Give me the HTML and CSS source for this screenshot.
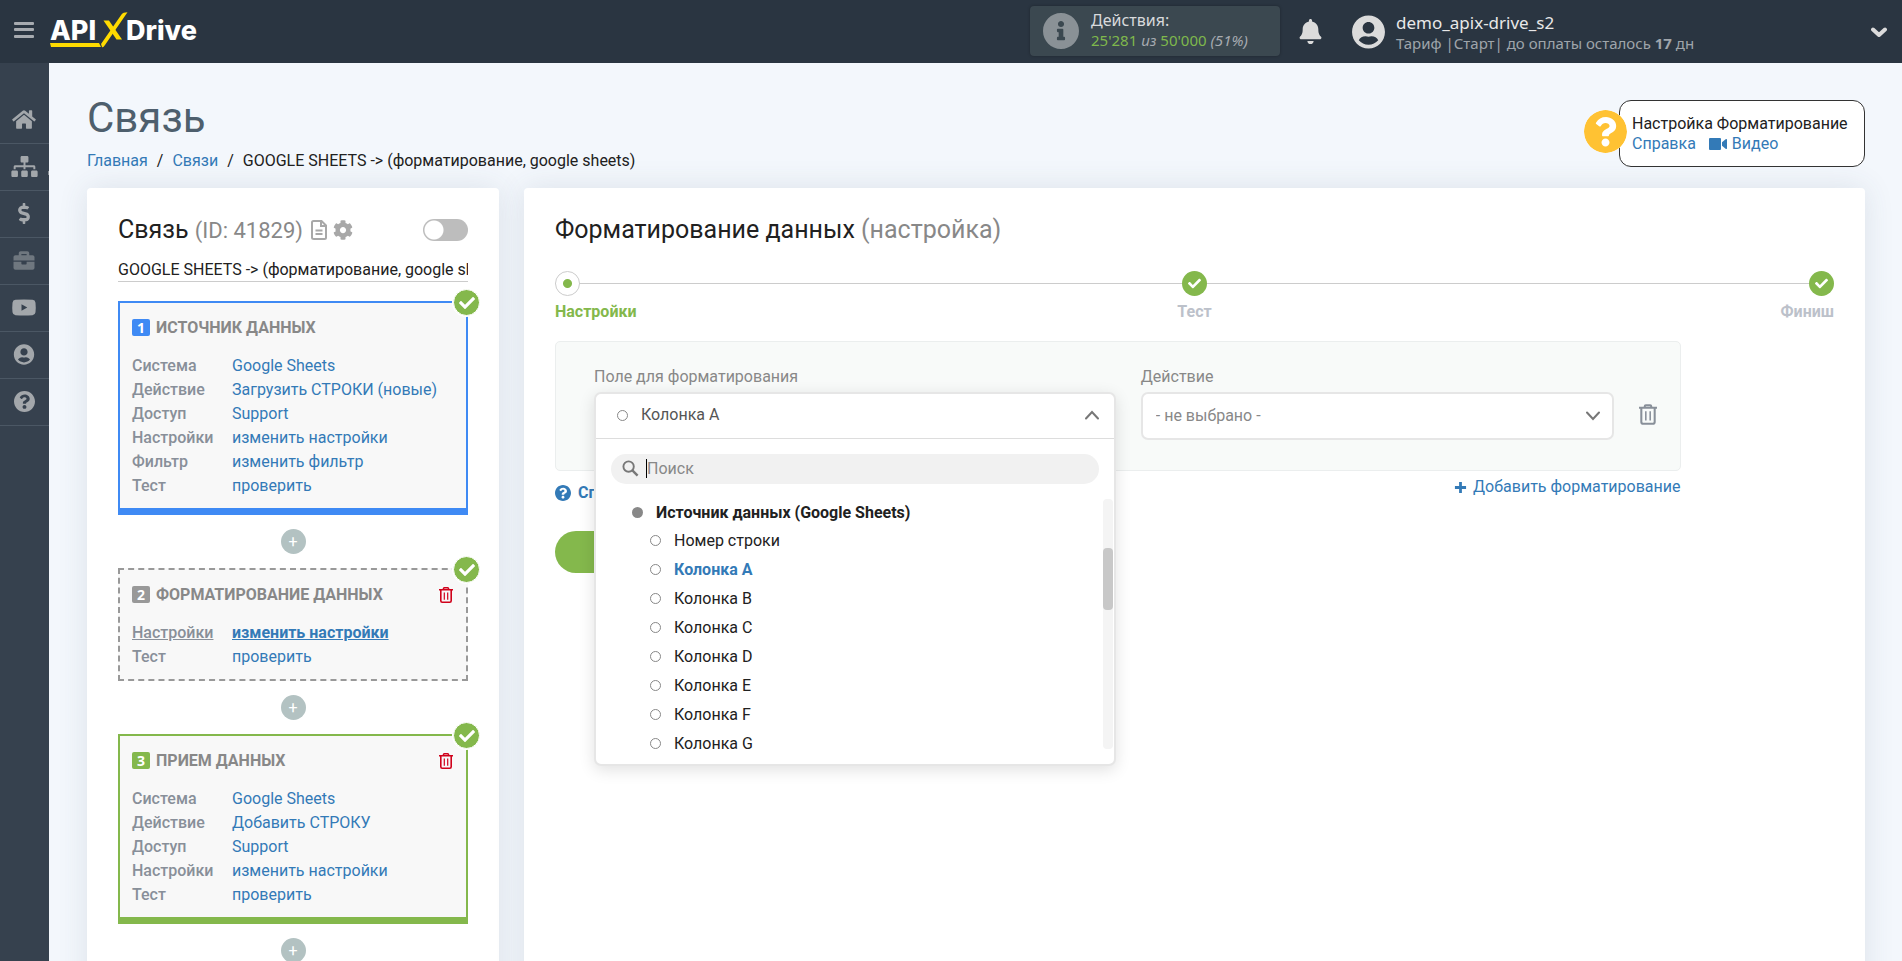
FILE: index.html
```html
<!DOCTYPE html>
<html lang="ru">
<head>
<meta charset="utf-8">
<title>Связь</title>
<link rel="stylesheet" href="styles.css">
</head>
<body>
<svg class="sprite" aria-hidden="true">
  <symbol id="i-bars" viewBox="0 0 20 18"><rect x="0" y="1" width="20" height="3" rx="1"/><rect x="0" y="7" width="20" height="3" rx="1"/><rect x="0" y="14" width="20" height="3" rx="1"/></symbol>
  <symbol id="i-home" viewBox="0 0 576 512"><path d="M280.37 148.26L96 300.11V464a16 16 0 0 0 16 16l112.06-.29a16 16 0 0 0 15.92-16V368a16 16 0 0 1 16-16h64a16 16 0 0 1 16 16v95.64a16 16 0 0 0 16 16.05L464 480a16 16 0 0 0 16-16V300L295.67 148.26a12.19 12.19 0 0 0-15.3 0zM571.6 251.47L488 182.56V44.05a12 12 0 0 0-12-12h-56a12 12 0 0 0-12 12v72.61L318.47 43a48 48 0 0 0-61 0L4.34 251.47a12 12 0 0 0-1.6 16.9l25.5 31A12 12 0 0 0 45.15 301l235.22-193.74a12.19 12.19 0 0 1 15.3 0L530.9 301a12 12 0 0 0 16.9-1.6l25.5-31a12 12 0 0 0-1.7-16.93z"/></symbol>
  <symbol id="i-sitemap" viewBox="0 0 640 512"><path d="M128 352H32c-17.67 0-32 14.33-32 32v96c0 17.67 14.33 32 32 32h96c17.67 0 32-14.33 32-32v-96c0-17.67-14.33-32-32-32zm-24-80h192v48h48v-48h192v48h48v-57.59c0-21.17-17.23-38.41-38.41-38.41H344v-64h40c17.67 0 32-14.33 32-32V32c0-17.67-14.33-32-32-32H256c-17.67 0-32 14.33-32 32v96c0 17.67 14.33 32 32 32h40v64H94.41C73.23 224 56 241.23 56 262.41V320h48v-48zm264 80h-96c-17.67 0-32 14.33-32 32v96c0 17.67 14.33 32 32 32h96c17.67 0 32-14.33 32-32v-96c0-17.67-14.33-32-32-32zm240 0h-96c-17.67 0-32 14.33-32 32v96c0 17.67 14.33 32 32 32h96c17.67 0 32-14.33 32-32v-96c0-17.67-14.33-32-32-32z"/></symbol>
  <symbol id="i-dollar" viewBox="0 0 288 512"><path d="M209.2 233.4l-108-31.6C88.7 198.2 80 186.5 80 173.5c0-16.3 13.2-29.5 29.5-29.5h66.3c12.2 0 24.2 3.7 34.2 10.5 6.1 4.1 14.3 3.1 19.5-2l34.8-34c7.1-6.9 6.1-18.4-1.8-24.5C238 74.8 207.4 64.1 176 64V16c0-8.8-7.2-16-16-16h-32c-8.8 0-16 7.2-16 16v48h-2.5C45.8 64-5.4 118.7.5 183.6c4.2 46.1 39.4 83.6 83.8 96.6l102.5 30c12.5 3.7 21.2 15.3 21.2 28.3 0 16.3-13.2 29.5-29.5 29.5h-66.3C100 368 88 364.3 78 357.5c-6.1-4.1-14.3-3.1-19.5 2l-34.8 34c-7.1 6.9-6.1 18.4 1.8 24.5 24.5 19.2 55.1 29.9 86.5 30v48c0 8.8 7.2 16 16 16h32c8.8 0 16-7.2 16-16v-48.2c46.6-.9 90.3-28.6 105.7-72.7 21.5-61.6-14.6-124.8-72.5-141.7z"/></symbol>
  <symbol id="i-briefcase" viewBox="0 0 512 512"><path d="M320 336c0 8.84-7.16 16-16 16h-96c-8.84 0-16-7.16-16-16v-48H0v144c0 25.6 22.4 48 48 48h416c25.6 0 48-22.4 48-48V288H320v48zm144-208h-80V80c0-25.6-22.4-48-48-48H176c-25.6 0-48 22.4-48 48v48H48c-25.6 0-48 22.4-48 48v80h512v-80c0-25.6-22.4-48-48-48zm-144 0H192V96h128v32z"/></symbol>
  <symbol id="i-youtube" viewBox="0 0 24 16"><path fill-rule="evenodd" d="M3.500.3Q12-.3 20.500.3Q23.200.5 23.500 3.200Q24 8 23.500 12.800Q23.200 15.500 20.500 15.700Q12 16.300 3.500 15.700Q.8 15.500.500 12.800Q0 8 .500 3.200Q.8.5 3.500.3zM9.500 4.700v6.600L15.300 8z"/></symbol>
  <symbol id="i-user" viewBox="0 0 496 512"><path d="M248 8C111 8 0 119 0 256s111 248 248 248 248-111 248-248S385 8 248 8zm0 96c48.600 0 88 39.400 88 88s-39.400 88-88 88-88-39.400-88-88 39.400-88 88-88zm0 344c-58.700 0-111.300-26.600-146.500-68.200 18.800-35.400 55.600-59.800 98.500-59.800 2.400 0 4.800.4 7.100 1.100 13 4.200 26.600 6.900 40.900 6.900 14.300 0 28-2.700 40.900-6.900 2.300-.7 4.700-1.100 7.100-1.100 42.900 0 79.700 24.400 98.500 59.800C359.300 421.400 306.700 448 248 448z"/></symbol>
  <symbol id="i-question" viewBox="8 8 496 496"><path d="M504 256c0 136.997-111.043 248-248 248S8 392.997 8 256C8 119.083 119.043 8 256 8s248 111.083 248 248zM262.655 90c-54.497 0-89.255 22.957-116.549 63.758-3.536 5.286-2.353 12.415 2.715 16.258l34.699 26.310c5.205 3.947 12.621 3.008 16.665-2.122 17.864-22.658 30.113-35.797 57.303-35.797 20.429 0 45.698 13.148 45.698 32.958 0 14.976-12.363 22.667-32.534 33.976C247.128 238.528 216 254.941 216 296v4c0 6.627 5.373 12 12 12h56c6.627 0 12-5.373 12-12v-1.333c0-28.462 83.186-29.647 83.186-106.667 0-58.002-60.165-102-116.531-102zM256 338c-25.365 0-46 20.635-46 46 0 25.364 20.635 46 46 46s46-20.636 46-46c0-25.365-20.635-46-46-46z"/></symbol>
  <symbol id="i-info" viewBox="8 8 496 496"><path d="M256 8C119.043 8 8 119.083 8 256c0 136.997 111.043 248 248 248s248-111.003 248-248C504 119.083 392.957 8 256 8zm0 110c23.196 0 42 18.804 42 42s-18.804 42-42 42-42-18.804-42-42 18.804-42 42-42zm56 254c0 6.627-5.373 12-12 12h-88c-6.627 0-12-5.373-12-12v-24c0-6.627 5.373-12 12-12h12v-64h-12c-6.627 0-12-5.373-12-12v-24c0-6.627 5.373-12 12-12h64c6.627 0 12 5.373 12 12v100h12c6.627 0 12 5.373 12 12v24z"/></symbol>
  <symbol id="i-bell" viewBox="0 0 448 512"><path d="M224 512c35.320 0 63.970-28.650 63.970-64H160.030c0 35.350 28.650 64 63.970 64zm215.390-149.710c-19.320-20.760-55.470-51.990-55.470-154.290 0-77.700-54.480-139.900-127.940-155.160V32c0-17.670-14.320-32-31.980-32s-31.980 14.330-31.980 32v20.840C118.560 68.100 64.080 130.300 64.080 208c0 102.300-36.150 133.530-55.470 154.290-6 6.450-8.660 14.160-8.610 21.710.11 16.400 12.980 32 32.100 32h383.800c19.120 0 32-15.600 32.100-32 .05-7.550-2.610-15.270-8.610-21.710z"/></symbol>
  <symbol id="i-check" viewBox="0 0 512 512"><path d="M173.898 439.404l-166.400-166.400c-9.997-9.997-9.997-26.206 0-36.204l36.203-36.204c9.997-9.998 26.207-9.998 36.204 0L192 312.690 432.095 72.596c9.997-9.997 26.207-9.997 36.204 0l36.203 36.204c9.997 9.997 9.997 26.206 0 36.204l-294.400 294.401c-9.998 9.997-26.207 9.997-36.204-.001z"/></symbol>
  <symbol id="i-cog" viewBox="0 0 512 512"><path d="M487.400 315.700l-42.600-24.600c4.300-23.200 4.300-47 0-70.200l42.600-24.600c4.900-2.800 7.100-8.600 5.500-14-11.100-35.600-30-67.800-54.700-94.600-3.800-4.100-10-5.100-14.800-2.300L380.800 110c-17.900-15.400-38.500-27.300-60.800-35.100V25.800c0-5.600-3.900-10.500-9.400-11.700-36.700-8.200-74.300-7.800-109.200 0-5.500 1.200-9.400 6.100-9.400 11.700V75c-22.200 7.900-42.800 19.800-60.800 35.100L88.700 85.500c-4.900-2.800-11-1.900-14.800 2.300-24.700 26.700-43.600 58.900-54.700 94.600-1.700 5.400.6 11.200 5.500 14L67.300 221c-4.300 23.200-4.300 47 0 70.200l-42.600 24.600c-4.900 2.800-7.100 8.600-5.500 14 11.100 35.600 30 67.800 54.700 94.600 3.800 4.100 10 5.100 14.800 2.300l42.600-24.600c17.900 15.400 38.500 27.300 60.800 35.100v49.200c0 5.600 3.900 10.500 9.400 11.700 36.700 8.200 74.300 7.800 109.200 0 5.500-1.200 9.400-6.100 9.400-11.700v-49.200c22.200-7.900 42.800-19.800 60.800-35.100l42.600 24.600c4.900 2.800 11 1.900 14.800-2.300 24.700-26.700 43.600-58.900 54.700-94.600 1.500-5.500-.7-11.300-5.600-14.100zM256 336c-44.100 0-80-35.900-80-80s35.900-80 80-80 80 35.900 80 80-35.900 80-80 80z"/></symbol>
  <symbol id="i-file" viewBox="0 0 16 20"><path d="M3 1h7.500L15 5.500V17.500q0 1.500-1.500 1.500H3q-2 0-2-1.500V2.500Q1 1 2.500 1zM10 1v5h5M4.500 10.500h7M4.500 14h7" fill="none" stroke="currentColor" stroke-width="2"/></symbol>
  <symbol id="i-trash" viewBox="0 0 14 16"><path d="M0 2.800h14M4.500 2.500V1.600Q4.500.8 5.300.8h3.400q.8 0 .8.800v.9M1.800 3v10.800q0 1.400 1.400 1.400h7.600q1.400 0 1.400-1.400V3" fill="none" stroke="currentColor" stroke-width="1.600"/><path d="M5.300 5.500v7.200M8.700 5.500v7.200" fill="none" stroke="currentColor" stroke-width="1.200"/></symbol>
  <symbol id="i-video" viewBox="0 0 18 12"><rect x="0" y="0" width="12" height="12" rx="1"/><path d="M13 4.300L16.600 1.200Q18 .6 18 1.800v8.400q0 1.200-1.400.6L13 7.700z"/></symbol>
  <symbol id="i-angle" viewBox="0 0 16 10"><path d="M2 2.500l6 5.500 6-5.500" fill="none" stroke="currentColor" stroke-width="4" stroke-linecap="round" stroke-linejoin="round"/></symbol>
  <symbol id="i-chev" viewBox="0 0 14 10"><path d="M1 1.500l6 6.500 6-6.500" fill="none" stroke="currentColor" stroke-width="2" stroke-linecap="round"/></symbol>
  <symbol id="i-plus" viewBox="0 0 14 14"><path d="M7 1v12M1 7h12" fill="none" stroke="currentColor" stroke-width="3"/></symbol>
  <symbol id="i-search" viewBox="0 0 18 18"><circle cx="7" cy="7" r="5.500" fill="none" stroke="currentColor" stroke-width="2"/><path d="M11 11l5.500 5.500" fill="none" stroke="currentColor" stroke-width="2.500"/></symbol>
</svg>

<header class="topbar">
  <button class="menu-btn" type="button" aria-label="Меню"><svg class="ic-bars"><use href="#i-bars"/></svg></button>
  <a class="logo" href="#" aria-label="ApiXDrive">
    <svg class="logo-art" viewBox="0 0 154 38">
      <path d="M0 32h49l2 4H1z" fill="#ffdb00"/>
      <path d="M51 33L71.500 3.500Q73 1.300 77.500 1.300L55 34Q53 37 52 36z" fill="#ffdb00"/>
      <path d="M53.500 9.500h5.500L72 28.500h-5.500z" fill="#ffdb00"/>
      <text class="logo-text" x="0" y="29">API</text>
      <text class="logo-text" x="76" y="29">Drive</text>
    </svg>
  </a>
  <div class="usage">
    <svg class="ic-info"><use href="#i-info"/></svg>
    <div class="usage-text">
      <div class="usage-title">Действия:</div>
      <div class="usage-num"><span class="green">25'281</span> <i>из</i> <span class="green">50'000</span> <i>(51%)</i></div>
    </div>
  </div>
  <button class="bell" type="button" aria-label="Уведомления"><svg class="ic-bell"><use href="#i-bell"/></svg></button>
  <button class="account" type="button">
    <svg class="ic-account"><use href="#i-user"/></svg>
    <span class="account-text"><span class="account-name">demo_apix-drive_s2</span><span class="account-plan">Тариф |Старт| до оплаты осталось <b>17</b> дн</span></span>
    <svg class="ic-angle"><use href="#i-angle"/></svg>
  </button>
</header>

<div class="shell">
  <nav class="side">
    <a href="#" aria-label="Главная"><svg class="s24"><use href="#i-home"/></svg></a>
    <a href="#" class="has-sub" aria-label="Связи"><svg class="s27"><use href="#i-sitemap"/></svg></a>
    <a href="#" aria-label="Оплата"><svg class="s22"><use href="#i-dollar"/></svg></a>
    <a href="#" class="dim" aria-label="Проекты"><svg class="s22"><use href="#i-briefcase"/></svg></a>
    <a href="#" aria-label="Видео"><svg class="s24"><use href="#i-youtube"/></svg></a>
    <a href="#" aria-label="Профиль"><svg class="s22"><use href="#i-user"/></svg></a>
    <a href="#" aria-label="Помощь"><svg class="s21"><use href="#i-question"/></svg></a>
  </nav>

  <main class="content">
    <div class="page-head">
      <div>
        <h1>Связь</h1>
        <nav class="crumbs"><a href="#">Главная</a><span>/</span><a href="#">Связи</a><span>/</span>GOOGLE SHEETS -&gt; (форматирование, google sheets)</nav>
      </div>
      <aside class="help">
        <svg class="ic-help"><use href="#i-question"/></svg>
        <div>Настройка Форматирование</div>
        <div class="help-links"><a href="#">Справка</a><a href="#"><svg class="ic-video"><use href="#i-video"/></svg>Видео</a></div>
      </aside>
    </div>

    <div class="columns">
      <section class="panel flow">
        <div class="flow-head">
          <h2>Связь <span class="muted">(ID: 41829)</span></h2>
          <svg class="ic-file"><use href="#i-file"/></svg>
          <svg class="ic-cog"><use href="#i-cog"/></svg>
          <input class="toggle" type="checkbox" aria-label="Включить связь">
        </div>
        <input class="name" type="text" aria-label="Название" value="GOOGLE SHEETS -> (форматирование, google sheets)">

        <article class="block blue">
          <span class="done"><svg><use href="#i-check"/></svg></span>
          <h3><span class="num">1</span>ИСТОЧНИК ДАННЫХ</h3>
          <dl>
            <dt>Система</dt><dd><a href="#">Google Sheets</a></dd>
            <dt>Действие</dt><dd><a href="#">Загрузить СТРОКИ (новые)</a></dd>
            <dt>Доступ</dt><dd><a href="#">Support</a></dd>
            <dt>Настройки</dt><dd><a href="#">изменить настройки</a></dd>
            <dt>Фильтр</dt><dd><a href="#">изменить фильтр</a></dd>
            <dt>Тест</dt><dd><a href="#">проверить</a></dd>
          </dl>
        </article>
        <button class="add" type="button">+</button>
        <article class="block gray">
          <span class="done"><svg><use href="#i-check"/></svg></span>
          <h3><span class="num">2</span>ФОРМАТИРОВАНИЕ ДАННЫХ<button class="del" type="button" aria-label="Удалить"><svg><use href="#i-trash"/></svg></button></h3>
          <dl>
            <dt class="current">Настройки</dt><dd class="current"><a href="#">изменить настройки</a></dd>
            <dt>Тест</dt><dd><a href="#">проверить</a></dd>
          </dl>
        </article>
        <button class="add" type="button">+</button>
        <article class="block lime">
          <span class="done"><svg><use href="#i-check"/></svg></span>
          <h3><span class="num">3</span>ПРИЕМ ДАННЫХ<button class="del" type="button" aria-label="Удалить"><svg><use href="#i-trash"/></svg></button></h3>
          <dl>
            <dt>Система</dt><dd><a href="#">Google Sheets</a></dd>
            <dt>Действие</dt><dd><a href="#">Добавить СТРОКУ</a></dd>
            <dt>Доступ</dt><dd><a href="#">Support</a></dd>
            <dt>Настройки</dt><dd><a href="#">изменить настройки</a></dd>
            <dt>Тест</dt><dd><a href="#">проверить</a></dd>
          </dl>
        </article>
        <button class="add" type="button">+</button>
      </section>

      <section class="panel setup">
        <h2>Форматирование данных <span class="muted">(настройка)</span></h2>
        <ol class="steps">
          <li class="active"><span class="dot"></span>Настройки</li>
          <li><span class="dot"><svg><use href="#i-check"/></svg></span>Тест</li>
          <li><span class="dot"><svg><use href="#i-check"/></svg></span>Финиш</li>
        </ol>

        <form class="form">
          <div class="rule">
            <div class="field source">
              <label for="src">Поле для форматирования</label>
              <div class="dropdown">
                <button id="src" class="dd-head" type="button" aria-expanded="true"><span class="ring"></span>Колонка A<svg class="ic-chev up"><use href="#i-chev"/></svg></button>
                <div class="search">
                  <svg class="ic-search"><use href="#i-search"/></svg><span class="caret"></span>
                  <input type="text" placeholder="Поиск" aria-label="Поиск">
                </div>
                <div class="dd-body">
                  <ul class="options">
                    <li class="group"><span class="bullet"></span>Источник данных (Google Sheets)</li>
                    <li><span class="ring"></span>Номер строки</li>
                    <li class="picked"><span class="ring"></span>Колонка A</li>
                    <li><span class="ring"></span>Колонка B</li>
                    <li><span class="ring"></span>Колонка C</li>
                    <li><span class="ring"></span>Колонка D</li>
                    <li><span class="ring"></span>Колонка E</li>
                    <li><span class="ring"></span>Колонка F</li>
                    <li><span class="ring"></span>Колонка G</li>
                  </ul>
                  <div class="track"><div class="thumb"></div></div>
                </div>
              </div>
            </div>
            <div class="field action">
              <label for="act">Действие</label>
              <div class="select"><select id="act"><option>- не выбрано -</option></select><svg class="ic-chev"><use href="#i-chev"/></svg></div>
            </div>
            <button class="rule-del" type="button" aria-label="Удалить"><svg><use href="#i-trash"/></svg></button>
          </div>
          <div class="under">
            <a class="hint" href="#"><svg><use href="#i-question"/></svg>Справка</a>
            <a class="more" href="#"><svg><use href="#i-plus"/></svg>Добавить форматирование</a>
          </div>
          <button class="next" type="button">Далее</button>
        </form>
      </section>
    </div>
  </main>
</div>
</body>
</html>
```
FILE: styles.css
```css
* { box-sizing: border-box; }
body {
  margin: 0;
  height: 100vh;
  overflow: hidden;
  display: flex;
  flex-direction: column;
  background: #f3f7fc;
  color: #212121;
  font: 16px/24px Roboto, "Noto Sans", sans-serif;
}
.sprite { position: absolute; width: 0; height: 0; }
svg { fill: currentColor; display: block; flex: none; }
button { font: inherit; color: inherit; border: 0; padding: 0; background: none; cursor: pointer; text-align: left; }
input, select { font: inherit; color: inherit; }
a { color: #337ab7; text-decoration: none; }
h1, h2, h3, dl, dd, ol, ul { margin: 0; padding: 0; }
ol, ul { list-style: none; }
.muted { color: #888; }

/* Top bar */
.topbar {
  flex: none;
  display: flex;
  align-items: center;
  height: 63px;
  background: #2a3541;
  font-family: "Noto Sans", sans-serif;
}
.menu-btn { padding: 0 14px; color: #a7abb0; }
.ic-bars { width: 20px; height: 18px; }
.topbar .menu-btn, .logo { margin-bottom: 3px; }
.logo { margin-left: 2px; }
.logo-art { width: 154px; height: 38px; }
.logo-text { font: 800 27px Inter, sans-serif; fill: #fff; }
.usage {
  display: flex;
  align-items: center;
  gap: 12px;
  width: 250px;
  height: 50px;
  margin: 0 0 1px auto;
  padding: 0 13px;
  border-radius: 4px;
  background: #3b4850;
  box-shadow: 0 0 3px rgba(0, 0, 0, .3);
}
.ic-info { width: 36px; height: 36px; color: #8a9196; }
.usage-text { padding-bottom: 3px; }
.usage-title { color: #d8dadc; font-size: 16px; line-height: 20px; }
.usage-num { color: #a7abb0; font-size: 15px; line-height: 20px; }
.green { color: #7fb84c; }
.bell { margin: 0 30px 0 19px; color: #dbdbdb; }
.ic-bell { width: 23px; height: 25px; }
.account { display: flex; align-items: center; width: 550px; padding-right: 15px; color: #dbdbdb; }
.ic-account { width: 33px; height: 34px; margin-right: 11px; }
.account-text { display: grid; }
.account-name { font-size: 17px; line-height: 22px; color: #e8e8e8; }
.account-plan { font-size: 15px; line-height: 18px; color: #9fa5ab; }
.ic-angle { width: 16px; height: 10px; margin-left: auto; }

/* Sidebar */
.shell { flex: 1; display: flex; min-height: 0; }
.side { flex: none; width: 49px; padding-top: 34px; background: #36414e; }
.side a {
  position: relative;
  display: flex;
  align-items: center;
  justify-content: center;
  height: 47px;
  padding: 0 1px 1px 0;
  border-bottom: 1px solid #4b5764;
  color: #a3a7ab;
}
.side .dim { color: #6f777f; }
.side .has-sub::after { content: ""; position: absolute; right: 0; top: 27px; width: 1px; height: 4px; background: #8a9096; }
.s21 { width: 21px; height: 21px; }
.s22 { width: 22px; height: 21px; }
.s24 { width: 24px; height: 21px; }
.s27 { width: 27px; height: 21px; }

/* Page head */
.content { flex: 1; min-width: 0; padding: 30px 37px 0 38px; }
.page-head { display: flex; justify-content: space-between; height: 95px; }
h1 { font-size: 42px; font-weight: 400; line-height: 50px; color: #4e5f6d; }
.crumbs { margin-top: 6px; }
.crumbs span { padding: 0 9px; }
.help {
  position: relative;
  align-self: flex-start;
  width: 246px;
  height: 67px;
  margin-top: 7px;
  padding: 13px 12px;
  border: 1px solid #333;
  border-radius: 12px;
  background: #fff;
  line-height: 20px;
  white-space: nowrap;
}
.ic-help { position: absolute; left: -36px; top: 9px; width: 43px; height: 43px; color: #ffc233; background: #fff; border-radius: 50%; }
.help-links { display: flex; gap: 13px; }
.help-links a { display: flex; align-items: center; gap: 5px; }
.ic-video { width: 18px; height: 12px; }

/* Panels */
.columns { display: flex; gap: 25px; min-height: calc(100vh - 188px); }
.panel { padding: 26px 31px 40px; border-radius: 4px; background: #fff; box-shadow: 0 0 30px rgba(60, 75, 100, .12); }
h2 { font-size: 25px; font-weight: 400; line-height: 32px; }
.flow { flex: 0 0 412px; }
.flow-head { display: flex; align-items: center; height: 32px; color: #a8a8a8; }
.flow-head h2 { color: #212121; }
.flow-head .muted { font-size: 22px; }
.ic-file { width: 16px; height: 20px; margin: 0 6px 0 8px; }
.ic-cog { width: 20px; height: 20px; }
.toggle {
  appearance: none;
  width: 45px;
  height: 22px;
  margin: 0 0 0 auto;
  border-radius: 11px;
  background: radial-gradient(circle at 11px 11px, #fff 9px, transparent 10px) #bdbdbd;
}
.name { display: block; width: 100%; height: 24px; margin: 12px 0 19px; padding: 1px 0 0; border: 0; border-bottom: 1px solid #ccc; border-radius: 0; background: none; outline: 0; }
.block { position: relative; padding: 13px 13px 10px 12px; border: 2px solid #3f8af4; background: #f8f8f8; --tone: #3f8af4; }
.blue { border-bottom-width: 7px; }
.gray { border: 2px dashed #999; --tone: #999; }
.lime { border-color: #84b84c; border-bottom-width: 7px; --tone: #84b84c; }
.done {
  position: absolute;
  top: -14px;
  right: -14px;
  display: grid;
  place-items: center;
  width: 27px;
  height: 27px;
  border: 1px solid #fff;
  border-radius: 50%;
  background: #84b84c;
  box-shadow: 0 0 0 1px #fff;
  color: #fff;
}
.done svg { width: 16px; height: 16px; }
h3 { display: flex; align-items: center; height: 24px; margin-bottom: 14px; font-size: 16px; font-weight: 700; color: #888; }
.num {
  width: 18px;
  height: 17px;
  margin: 0 6px 2px 0;
  border-radius: 2px;
  background: var(--tone);
  color: #fff;
  font: 700 14px/17px "Open Sans", sans-serif;
  text-align: center;
}
.del { margin-left: auto; color: #d0021b; }
.del svg { width: 14px; height: 16px; }
dl { display: grid; grid-template-columns: 100px 1fr; }
dt { font-weight: 500; color: #888f99; }
dt.current { text-decoration: underline; }
dd.current a { font-weight: 700; text-decoration: underline; }
.add { display: block; width: 25px; height: 25px; margin: 14px auto; border-radius: 50%; background: #b3c2c2; color: #fff; line-height: 24px; text-align: center; }

/* Setup panel */
.setup { flex: 1; min-width: 0; }
.steps {
  display: flex;
  justify-content: space-between;
  margin: 25px 0 17px;
  background: linear-gradient(#ccc, #ccc) 0 12px / 100% 1px no-repeat;
  font-weight: 700;
  color: #bcc1ca;
}
.steps li { flex: 0 0 90px; display: grid; gap: 4px; justify-items: center; }
.steps li:first-child { justify-items: start; }
.steps li:last-child { justify-items: end; }
.steps .active { color: #84b84c; }
.dot { display: grid; place-items: center; width: 25px; height: 25px; border-radius: 50%; background: #84b84c; color: #fff; }
.dot svg { width: 13px; height: 13px; }
.active .dot { border: 1px solid #ccc; background: radial-gradient(circle, #84b84c 4px, #fff 5px); }
.form { width: 88%; }
.rule {
  display: flex;
  gap: 25px;
  height: 130px;
  padding: 23px 23px 0 38px;
  border: 1px solid #ebeeee;
  border-radius: 5px;
  background: #f8faf9;
}
.field { position: relative; min-width: 0; }
.source { flex: 521 1 0; }
.action { flex: 472 1 0; }
.field label { display: block; margin-bottom: 3px; color: #888; }
.dropdown {
  position: absolute;
  left: 0;
  right: 0;
  z-index: 5;
  padding-bottom: 13px;
  border: 2px solid #e6e6e6;
  border-radius: 7px;
  background: #fff;
  box-shadow: 0 4px 16px rgba(0, 0, 0, .12);
}
.dd-head { display: flex; align-items: center; width: 100%; height: 45px; padding: 0 15px 2px 21px; border-bottom: 1px solid #ddd; color: #555; }
.ring { flex: none; width: 11px; height: 11px; margin-right: 13px; border: 1px solid #888; border-radius: 50%; }
.ic-chev { width: 14px; height: 10px; margin-left: auto; color: #777; }
.up { transform: rotate(180deg); }
.search { display: flex; align-items: center; height: 30px; margin: 15px; padding: 0 0 1px 11px; border-radius: 15px; background: #f1f1f1; }
.ic-search { width: 17px; height: 17px; color: #777; }
.caret { width: 1px; height: 19px; margin-left: 7px; background: #000; }
.search input { flex: 1; height: 28px; padding: 0; border: 0; background: none; outline: 0; }
.search input::placeholder { color: #888; opacity: 1; }
.dd-body { display: flex; height: 252px; padding-right: 1px; }
.options { flex: 1; line-height: 29px; overflow: hidden; }
.options li { display: flex; align-items: center; height: 29px; padding-left: 54px; }
.options .group { height: 27px; padding-left: 36px; font-weight: 700; }
.bullet { width: 11px; height: 11px; margin-right: 13px; border-radius: 50%; background: #888; }
.picked { font-weight: 700; color: #337ab7; }
.track { width: 10px; height: 250px; padding-top: 49px; border-radius: 4px; background: #f4f4f4; }
.thumb { height: 62px; border-radius: 4px; background: #c8c8c8; }
.select { position: relative; }
.select select { appearance: none; width: 100%; height: 48px; padding: 0 13px; border: 2px solid #e6e6e6; border-radius: 7px; background: #fff; color: #888; }
.select .ic-chev { position: absolute; right: 14px; top: 19px; }
.rule-del { height: 22px; margin-top: 38px; color: #888f99; }
.rule-del svg { width: 18px; height: 21px; }
.under { display: flex; justify-content: space-between; margin-top: 4px; }
.under a { display: flex; align-items: center; }
.hint { gap: 7px; margin-top: 6px; font-weight: 700; }
.hint svg { width: 16px; height: 16px; }
.more { gap: 6px; align-self: flex-start; }
.more svg { width: 13px; height: 13px; }
.next { width: 180px; height: 42px; margin-top: 26px; border-radius: 21px; background: #84b84c; color: #fff; text-align: center; }
```
